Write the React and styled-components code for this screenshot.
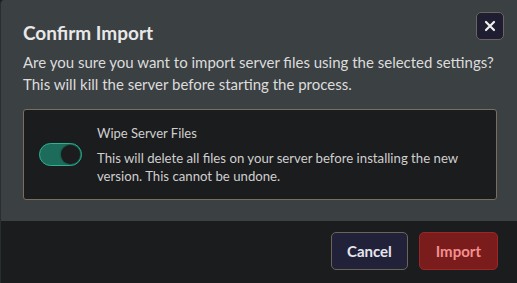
import React, { useState } from "react";
import styled, { createGlobalStyle } from "styled-components";

const GlobalStyle = createGlobalStyle`
  html, body {
    margin: 0;
    padding: 0;
    background: #1b1c1e;
  }
  body {
    font-family: Lato, "Noto Sans", sans-serif;
  }
`;

const Modal = styled.div`
  width: 517px;
  height: 283px;
  display: flex;
  flex-direction: column;
  box-sizing: border-box;
  border-left: 1px solid #2a2d2f;
  border-top-left-radius: 4px;
  overflow: hidden;
`;

const Body = styled.div`
  background: #3b4043;
  padding: 12px 13px 21px 22px;
  display: flex;
  flex-direction: column;
`;

const Header = styled.div`
  display: flex;
  justify-content: space-between;
  align-items: flex-start;
`;

const Title = styled.h2`
  margin: 9px 0 0 0;
  font-size: 19px;
  font-weight: 700;
  line-height: 24px;
  color: #e8e8e8;
`;

const CloseButton = styled.button`
  width: 28px;
  height: 28px;
  padding: 0;
  border-radius: 5px;
  border: 1px solid #6a665e;
  background: #1f1d31;
  color: #f0f0f0;
  display: flex;
  align-items: center;
  justify-content: center;
  cursor: pointer;
`;

const Message = styled.p`
  margin: 6px 0 0 0;
  font-size: 15px;
  line-height: 22px;
  color: #dcdcdc;
`;

const OptionCard = styled.div`
  margin: 14px 7px 0 0;
  height: 91px;
  box-sizing: border-box;
  background: #1b1c1e;
  border: 1px solid #7a6f5e;
  border-radius: 3px;
  display: flex;
  align-items: center;
  padding: 0 16px 0 15px;
  gap: 15px;
`;

const Toggle = styled.button`
  flex: none;
  width: 43px;
  height: 23px;
  border-radius: 12px;
  border: 1px solid ${p => (p.$on ? "#2bb393" : "#666")};
  background: ${p => (p.$on ? "#1d6b5a" : "#2a2c2e")};
  display: flex;
  align-items: center;
  justify-content: ${p => (p.$on ? "flex-end" : "flex-start")};
  padding: 0 1px;
  box-sizing: border-box;
  cursor: pointer;
`;

const Knob = styled.span`
  width: 19px;
  height: 19px;
  border-radius: 50%;
  background: #1c1c1f;
  box-shadow: 0 0 2px rgba(0, 0, 0, 0.6);
`;

const OptionText = styled.div`
  display: flex;
  flex-direction: column;
  margin-top: -1px;
`;

const OptionLabel = styled.div`
  font-size: 13px;
  line-height: 18px;
  color: #cfcfcf;
`;

const OptionDesc = styled.div`
  margin-top: 7px;
  font-size: 13.2px;
  line-height: 18px;
  color: #cfcfcf;
`;

const Footer = styled.div`
  flex: 1;
  background: #1b1c1e;
  display: flex;
  justify-content: flex-end;
  align-items: flex-start;
  gap: 11px;
  padding: 11px 19px 0 0;
`;

const Button = styled.button`
  height: 38px;
  padding: 0 ${p => p.$px}px;
  border-radius: 5px;
  font-family: Lato, "Noto Sans", sans-serif;
  font-size: 15px;
  font-weight: 700;
  cursor: pointer;
  border: 1px solid ${p => p.$border};
  background: ${p => p.$bg};
  color: ${p => p.$color};
`;

export default function App() {
  const [wipe, setWipe] = useState(true);

  return (
    <>
      <GlobalStyle />
      <Modal>
        <Body>
          <Header>
            <Title>Confirm Import</Title>
            <CloseButton aria-label="Close">
              <svg width="14" height="14" viewBox="0 0 14 14">
                <path d="M3 3 L11 11 M11 3 L3 11" stroke="currentColor" strokeWidth="2.2" strokeLinecap="round" />
              </svg>
            </CloseButton>
          </Header>
          <Message>
            Are you sure you want to import server files using the selected settings? This will kill the server before starting the process.
          </Message>
          <OptionCard>
            <Toggle $on={wipe} onClick={() => setWipe(!wipe)}>
              <Knob />
            </Toggle>
            <OptionText>
              <OptionLabel>Wipe Server Files</OptionLabel>
              <OptionDesc>
                This will delete all files on your server before installing the new version. This cannot be undone.
              </OptionDesc>
            </OptionText>
          </OptionCard>
        </Body>
        <Footer>
          <Button $px={15} $bg="#22213a" $border="#6b6458" $color="#e6e6ee">Cancel</Button>
          <Button $px={16} $bg="#7a1c1c" $border="#9c2626" $color="#f29090">Import</Button>
        </Footer>
      </Modal>
    </>
  );
}
